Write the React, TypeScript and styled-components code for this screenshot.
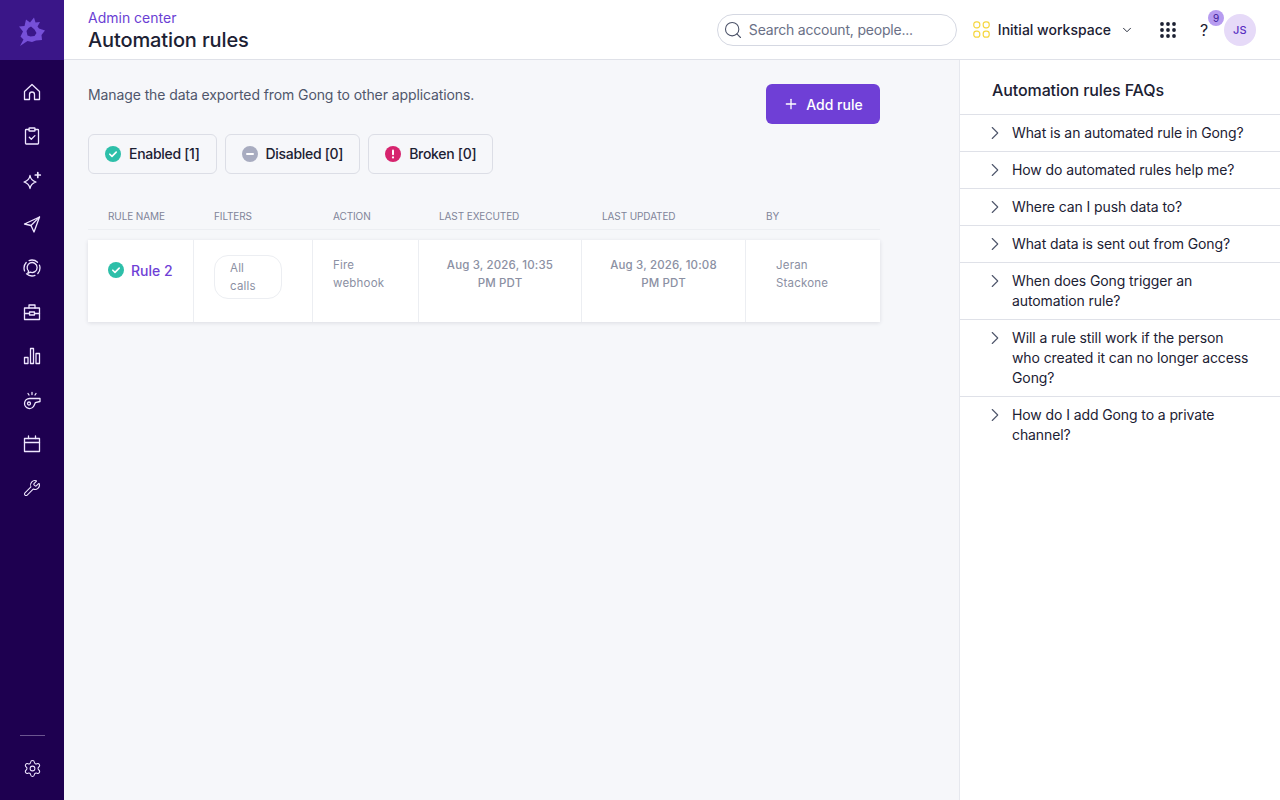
import React from 'react';
import styled, { createGlobalStyle } from 'styled-components';
import { ChevronDown, ChevronRight, Plus, Search, Settings, Wrench } from 'lucide-react';

const GlobalStyle = createGlobalStyle`
  html, body { margin: 0; padding: 0; height: 100%; }
  body {
    font-family: Inter, "Liberation Sans", sans-serif;
    background: #f6f7fa;
    color: #1c2133;
  }
  * { box-sizing: border-box; }
`;

const faqs = [
  'What is an automated rule in Gong?',
  'How do automated rules help me?',
  'Where can I push data to?',
  'What data is sent out from Gong?',
  'When does Gong trigger an automation rule?',
  'Will a rule still work if the person who created it can no longer access Gong?',
  'How do I add Gong to a private channel?',
];

const Glyph = ({ children }: { children: React.ReactNode }) => (
  <svg width="20" height="20" viewBox="0 0 20 20" fill="none" stroke="currentColor" strokeWidth="1.3" strokeLinecap="round" strokeLinejoin="round">
    {children}
  </svg>
);

const navIcons = [
  <Glyph key="home"><path d="M2.5 9.5 10 2.500l7.500 7v8h-5v-5a2.500 2.500 0 0 0-5 0v5h-5z" /></Glyph>,
  <Glyph key="tasks"><path d="M7 3.500H4.200a.7.7 0 0 0-.7.7v13.100c0 .4.3.7.7.7h11.600c.4 0 .7-.3.7-.7V4.200a.7.7 0 0 0-.7-.7H13" /><rect x="7" y="2" width="6" height="3" rx=".6" /><path d="m7.300 11.200 2 2 3.600-3.600" /></Glyph>,
  <Glyph key="spark"><path d="M8 5.500c.6 3.500 2.500 5.500 6 6.500-3.500 1-5.400 3-6 6.500-.6-3.500-2.500-5.500-6-6.500 3.500-1 5.400-3 6-6.500z" /><path d="M15.800 2.500v5M13.300 5h5" strokeWidth="1.700" /></Glyph>,
  <Glyph key="send"><path d="M17.500 3 2.500 10 9 11.500 12 18z" /><path d="M17.500 3 9 11.500" /></Glyph>,
  <Glyph key="engage"><path d="M6.600 13.100 5.800 15.300 8.300 14.200A5 5 0 1 0 6.600 13.100z" /><circle cx="10" cy="10" r="8" strokeDasharray="9 3.500" strokeDashoffset="3" /></Glyph>,
  <Glyph key="deals"><rect x="2.500" y="6" width="15" height="11.500" /><path d="M7 6V3h6v3M2.500 11.500h5M12.500 11.500h5" /><rect x="7.500" y="10" width="5" height="3" /></Glyph>,
  <Glyph key="stats"><rect x="2.500" y="11.500" width="3.500" height="6" /><rect x="8.500" y="2.500" width="3" height="15" /><rect x="14" y="7.500" width="3.500" height="10" /></Glyph>,
  <Glyph key="whistle"><path d="M18 8.500H7.500a5 5 0 1 0 4.800 6.500l1-2.300 4.700-1.200z" /><circle cx="7" cy="13.500" r="1.500" /><path d="M10 2.500v2M6 3.500l1 1.500M14 3.500 13 5" /></Glyph>,
  <Glyph key="calendar"><rect x="2.500" y="4.500" width="15" height="13" /><path d="M2.500 8.500h15M6.500 2v2.500M13.500 2v2.500" /></Glyph>,
  <Wrench key="wrench" size={18} strokeWidth={1.4} />,
];

const Check = ({ size }: { size: number }) => (
  <svg width={size} height={size} viewBox="0 0 16 16">
    <circle cx="8" cy="8" r="8" fill="#2dbfa9" />
    <path d="m4.800 8.200 2.200 2.200 4.200-4.300" fill="none" stroke="#fff" strokeWidth="1.600" strokeLinecap="round" strokeLinejoin="round" />
  </svg>
);

const Minus = () => (
  <svg width="16" height="16" viewBox="0 0 16 16">
    <circle cx="8" cy="8" r="8" fill="#a8acc0" />
    <rect x="4" y="7" width="8" height="2" rx="1" fill="#fff" />
  </svg>
);

const Alert = () => (
  <svg width="16" height="16" viewBox="0 0 16 16">
    <circle cx="8" cy="8" r="8" fill="#d6246e" />
    <rect x="7" y="3.500" width="2" height="5.800" rx="1" fill="#fff" />
    <circle cx="8" cy="11.400" r="1.100" fill="#fff" />
  </svg>
);

const Logo = () => (
  <svg width="36" height="36" viewBox="14 12 36 36" fill="#7650d8">
    <path
      fillRule="evenodd"
      d="M34 17.500 35.500 22.500 40 22 37.500 26.500 39 28.500 45 30.500 41.500 35 42 40 36 40.500 32 42 27.500 41 20 46 23.500 39.500 20.500 36.500 23 31.500 19 26.500 24.500 26 26 19.500 30 22.500zM31 26.500 28.500 28 26.500 31 27.500 35.500 30.500 36.500 34.500 36 36.500 33 34.500 29.500z"
    />
  </svg>
);

const Workspace = () => (
  <svg width="17" height="17" viewBox="0 0 17 17" fill="none" stroke="#f5d63d" strokeWidth="1.200">
    <rect x=".8" y=".8" width="6" height="6" rx="2.500" />
    <rect x="10.200" y=".8" width="6" height="6" rx="2.500" />
    <rect x=".8" y="10.200" width="6" height="6" rx="2.500" />
    <rect x="10.200" y="10.200" width="6" height="6" rx="2.500" />
  </svg>
);

const Dots = () => (
  <svg width="16" height="16" viewBox="0 0 16 16" fill="#1c2133">
    {[2, 8, 14].flatMap((y) => [2, 8, 14].map((x) => <circle key={`${x}-${y}`} cx={x} cy={y} r="1.900" />))}
  </svg>
);

export default function App() {
  return (
    <Page>
      <GlobalStyle />
      <Sidebar>
        <LogoTile><Logo /></LogoTile>
        <NavList>
          {navIcons.map((icon, i) => <NavItem key={i}>{icon}</NavItem>)}
        </NavList>
        <SidebarFoot>
          <Rule />
          <NavItem><Settings size={19} strokeWidth={1.3} /></NavItem>
        </SidebarFoot>
      </Sidebar>

      <Body>
        <Header>
          <Titles>
            <Crumb>Admin center</Crumb>
            <PageTitle>Automation rules</PageTitle>
          </Titles>
          <SearchBox>
            <Search size={20} strokeWidth={1.3} color="#4b5268" />
            <span>Search account, people...</span>
          </SearchBox>
          <WorkspaceButton>
            <Workspace />
            <span>Initial workspace</span>
            <ChevronDown size={14} strokeWidth={1.6} />
          </WorkspaceButton>
          <AppsButton><Dots /></AppsButton>
          <Help>
            ?
            <HelpBadge>9</HelpBadge>
          </Help>
          <Avatar>JS</Avatar>
        </Header>

        <Columns>
          <Main>
            <Intro>
              <Lead>Manage the data exported from Gong to other applications.</Lead>
              <AddButton><Plus size={16} strokeWidth={2} />Add rule</AddButton>
            </Intro>
            <Filters>
              <FilterChip><Check size={16} />Enabled [1]</FilterChip>
              <FilterChip><Minus />Disabled [0]</FilterChip>
              <FilterChip><Alert />Broken [0]</FilterChip>
            </Filters>

            <HeadRow>
              <HeadCell>Rule name</HeadCell>
              <HeadCell>Filters</HeadCell>
              <HeadCell>Action</HeadCell>
              <HeadCell>Last executed</HeadCell>
              <HeadCell>Last updated</HeadCell>
              <HeadCell>By</HeadCell>
            </HeadRow>
            <DataRow>
              <NameCell><Check size={16} /><RuleLink>Rule 2</RuleLink></NameCell>
              <FilterCell><Pill>All calls</Pill></FilterCell>
              <TextCell>Fire webhook</TextCell>
              <DateCell>Aug 3, 2026, 10:35 PM PDT</DateCell>
              <DateCell>Aug 3, 2026, 10:08 PM PDT</DateCell>
              <ByCell>Jeran Stackone</ByCell>
            </DataRow>
          </Main>

          <Aside>
            <AsideTitle>Automation rules FAQs</AsideTitle>
            {faqs.map((q) => (
              <Faq key={q}>
                <FaqArrow><ChevronRight size={22} strokeWidth={1.2} /></FaqArrow>
                <span>{q}</span>
              </Faq>
            ))}
          </Aside>
        </Columns>
      </Body>
    </Page>
  );
}

const columns = '106px 119px 106px 163px 164px 134px';

const Page = styled.div`
  display: flex;
  width: 100%;
  height: 100vh;
  overflow: hidden;
`;

const Sidebar = styled.nav`
  width: 64px;
  flex: none;
  display: flex;
  flex-direction: column;
  align-items: center;
  background: #1e0050;
  color: #efe6ff;
`;

const LogoTile = styled.div`
  width: 100%;
  height: 60px;
  display: flex;
  align-items: center;
  justify-content: center;
  background: #3a1688;
`;

const NavList = styled.div`
  display: flex;
  flex-direction: column;
  padding-top: 10px;
`;

const NavItem = styled.div`
  width: 64px;
  height: 44px;
  display: flex;
  align-items: center;
  justify-content: center;
`;

const SidebarFoot = styled.div`
  margin-top: auto;
  padding-bottom: 10px;
  display: flex;
  flex-direction: column;
  align-items: center;
  gap: 10px;
`;

const Rule = styled.div`
  width: 25px;
  height: 1px;
  background: #6b5590;
`;

const Body = styled.div`
  flex: 1;
  min-width: 0;
  display: flex;
  flex-direction: column;
`;

const Header = styled.header`
  height: 60px;
  flex: none;
  display: flex;
  align-items: center;
  padding: 0 24px;
  background: #fff;
  border-bottom: 1px solid #dfe1e8;
`;

const Titles = styled.div`
  flex: 1;
  display: flex;
  flex-direction: column;
  padding-top: 3px;
`;

const Crumb = styled.div`
  font-size: 14px;
  line-height: 18px;
  color: #6b3fd4;
`;

const PageTitle = styled.h1`
  margin: 0;
  font-size: 20px;
  line-height: 26px;
  font-weight: 500;
  letter-spacing: -0.12px;
  color: #1c2133;
`;

const SearchBox = styled.div`
  width: 240px;
  height: 32px;
  display: flex;
  align-items: center;
  gap: 6px;
  padding: 0 5px;
  border: 1px solid #d5d8e2;
  border-radius: 16px;
  font-size: 14px;
  letter-spacing: -0.2px;
  color: #6a7086;
`;

const WorkspaceButton = styled.div`
  margin-left: 16px;
  display: flex;
  align-items: center;
  gap: 8px;
  font-size: 14px;
  font-weight: 500;
  color: #1c2133;

  svg:last-child {
    margin-left: 1px;
  }
`;

const AppsButton = styled.div`
  margin-left: 26px;
  display: flex;
`;

const Help = styled.div`
  position: relative;
  margin-left: 24px;
  width: 24px;
  font-size: 16px;
  text-align: left;
  color: #1c2133;
`;

const HelpBadge = styled.span`
  position: absolute;
  top: -10px;
  left: 8px;
  width: 16px;
  height: 16px;
  border-radius: 50%;
  background: #b79cf0;
  color: #3d1a99;
  font-size: 10px;
  line-height: 16px;
  text-align: center;
`;

const Avatar = styled.div`
  width: 32px;
  height: 32px;
  border-radius: 50%;
  background: #e6daf8;
  color: #5a2fc2;
  font-size: 11px;
  font-weight: 500;
  letter-spacing: 0.3px;
  display: flex;
  align-items: center;
  justify-content: center;
`;

const Columns = styled.div`
  flex: 1;
  min-height: 0;
  display: flex;
`;

const Main = styled.main`
  width: 895px;
  flex: none;
  padding: 24px 79px 0 24px;
`;

const Intro = styled.div`
  display: flex;
  justify-content: space-between;
  align-items: flex-start;
`;

const Lead = styled.p`
  margin: 0;
  font-size: 14px;
  line-height: 22px;
  letter-spacing: -0.1px;
  color: #4f566b;
`;

const AddButton = styled.button`
  width: 114px;
  height: 40px;
  display: flex;
  align-items: center;
  justify-content: center;
  gap: 7px;
  border: 0;
  border-radius: 6px;
  background: #6f3fd6;
  color: #fff;
  font: 500 14px Inter, sans-serif;
`;

const Filters = styled.div`
  display: flex;
  gap: 8px;
  margin-top: 10px;
`;

const FilterChip = styled.div`
  height: 40px;
  display: flex;
  align-items: center;
  gap: 8px;
  padding: 0 16px 2px;
  border: 1px solid #dcdee6;
  border-radius: 6px;
  font-size: 14px;
  font-weight: 500;
  letter-spacing: -0.3px;
  color: #1c2133;

  svg {
    margin-top: 2px;
  }
`;

const HeadRow = styled.div`
  display: grid;
  grid-template-columns: ${columns};
  height: 30px;
  margin-top: 26px;
  padding-top: 3px;
  border-bottom: 1px solid #eceef2;
`;

const HeadCell = styled.div`
  display: flex;
  align-items: center;
  padding-left: 20px;
  font-size: 10px;
  letter-spacing: -0.1px;
  text-transform: uppercase;
  color: #7f8499;
  white-space: nowrap;
`;

const DataRow = styled.div`
  display: grid;
  grid-template-columns: ${columns};
  height: 82px;
  margin-top: 10px;
  background: #fff;
  box-shadow: 0 1px 4px rgba(30, 35, 60, 0.12);
`;

const Cell = styled.div`
  padding: 16px 20px;
  border-right: 1px solid #eceef2;
  font-size: 11.5px;
  line-height: 18px;
  letter-spacing: 0.2px;
  color: #8b90a3;

  &:last-child {
    border-right: 0;
  }
`;

const NameCell = styled(Cell)`
  display: flex;
  align-items: flex-start;
  gap: 7px;
  padding: 22px 0 0 20px;
`;

const RuleLink = styled.span`
  font-size: 14px;
  line-height: 18px;
  letter-spacing: 0;
  font-weight: 500;
  color: #6f3fd6;
`;

const FilterCell = styled(Cell)`
  padding-top: 15px;
`;

const Pill = styled.span`
  display: block;
  width: 68px;
  padding: 3px 15px;
  border: 1px solid #eceef2;
  border-radius: 14px;
`;

const TextCell = styled(Cell)``;

const DateCell = styled(Cell)`
  text-align: center;
  font-weight: 500;
  letter-spacing: 0.15px;
  padding: 16px 24px;
`;

const ByCell = styled(Cell)`
  padding-left: 30px;
  padding-right: 40px;
`;

const Aside = styled.aside`
  flex: 1;
  min-width: 0;
  background: #fff;
  border-left: 1px solid #e6e8ee;
`;

const AsideTitle = styled.h2`
  margin: 0;
  height: 55px;
  padding: 20px 0 0 32px;
  font-size: 16px;
  line-height: 20px;
  font-weight: 500;
  letter-spacing: -0.1px;
  border-bottom: 1px solid #dfe1e8;
`;

const Faq = styled.div`
  display: flex;
  gap: 6px;
  padding: 8px 28px 8px 24px;
  border-bottom: 1px solid #dfe1e8;
  font-size: 14px;
  line-height: 20px;
  letter-spacing: -0.1px;
  color: #1c2133;

  &:last-child {
    border-bottom: 0;
  }
`;

const FaqArrow = styled.span`
  flex: none;
  height: 20px;
  display: flex;
  align-items: center;
  color: #4f566b;
`;
